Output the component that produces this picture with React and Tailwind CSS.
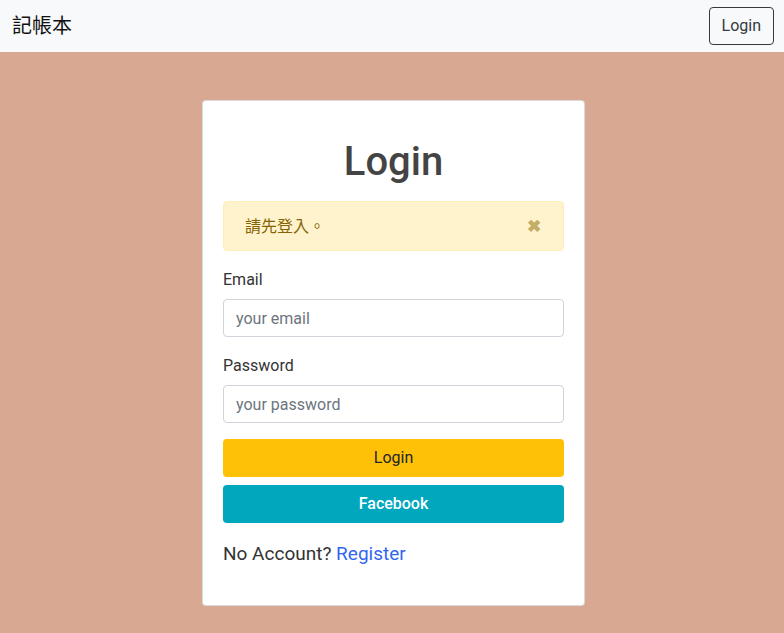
import React, { useState } from "react";

const App = () => {
  const [showAlert, setShowAlert] = useState(true);
  const [form, setForm] = useState({ email: "", password: "" });

  return (
    <div
      className="min-h-screen bg-[#d8a893] text-[#212529]"
      style={{ fontFamily: 'Roboto, "Noto Sans CJK TC", sans-serif' }}
    >
      {/* Navbar */}
      <nav className="h-[52px] bg-[#f8f9fa] flex items-center justify-between pl-[12px] pr-[10px]">
        <span className="text-[20px] text-[#111]">記帳本</span>
        <button className="h-[38px] px-[12px] border border-[#343a40] rounded-[4px] text-[16px] text-[#343a40]">
          Login
        </button>
      </nav>

      <div className="flex justify-center pt-[48px] pl-[3px]">
        <div className="w-[383px] bg-white border border-black/15 rounded-[4px] px-[20px] pt-[37px] pb-[36px]">
          <h1 className="text-[40px] leading-[48px] text-center text-[#444] font-medium mb-[15px]">
            Login
          </h1>

          {showAlert && (
            <div className="h-[50px] bg-[#fff3cd] border border-[#ffeeba] rounded-[4px] flex items-center justify-between pl-[21px] pr-[22px] pt-[1px] text-[#856404] text-[16px] mb-[16px]">
              <span>請先登入。</span>
              <button
                onClick={() => setShowAlert(false)}
                className="text-[#c4ad68] text-[17px] font-bold leading-none"
              >
                ✖
              </button>
            </div>
          )}

          <div className="mb-[16px]">
            <label className="block text-[16px] leading-[24px] pt-[1px] h-[24px] text-[#333] mb-[8px]">
              Email
            </label>
            <input
              type="email"
              value={form.email}
              onChange={(e) => setForm({ ...form, email: e.target.value })}
              placeholder="your email"
              className="w-full h-[38px] border border-[#ced4da] rounded-[4px] px-[12px] text-[16px] outline-none placeholder:text-[#6c757d]"
            />
          </div>

          <div className="mb-[16px]">
            <label className="block text-[16px] leading-[24px] pt-[1px] h-[24px] text-[#333] mb-[8px]">
              Password
            </label>
            <input
              type="password"
              value={form.password}
              onChange={(e) => setForm({ ...form, password: e.target.value })}
              placeholder="your password"
              className="w-full h-[38px] border border-[#ced4da] rounded-[4px] px-[12px] text-[16px] outline-none placeholder:text-[#6c757d]"
            />
          </div>

          <button className="w-full h-[38px] bg-[#ffc107] rounded-[4px] text-[16px] text-[#212529] mb-[8px]">
            Login
          </button>
          <button className="w-full h-[38px] bg-[#00a7bd] rounded-[4px] text-[16px] text-white font-medium">
            Facebook
          </button>

          <p className="mt-[16px] text-[19px] leading-[30px] text-[#333]">
            No Account?{" "}
            <a href="#" className="text-[#3366f0]">
              Register
            </a>
          </p>
        </div>
      </div>
    </div>
  );
};

export default App;
